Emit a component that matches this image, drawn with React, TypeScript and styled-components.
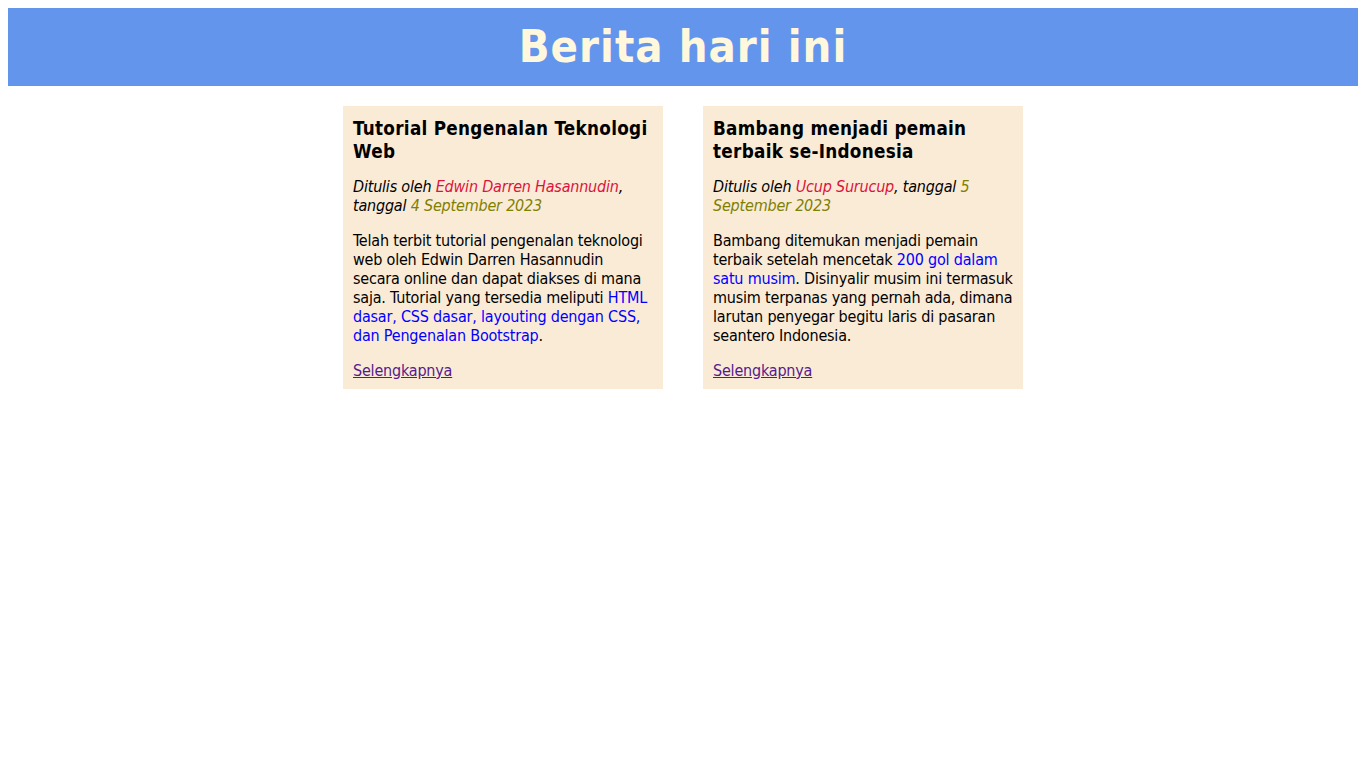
import React from "react";
import styled, { createGlobalStyle } from "styled-components";

const GlobalStyle = createGlobalStyle`
  body {
    margin: 8px;
    background: #ffffff;
    font-family: Tahoma, "DejaVu Sans Condensed", "DejaVu Sans", sans-serif;
    color: #000000;
  }
`;

const Header = styled.header`
  height: 78px;
  background: #6495ed;
  display: flex;
  align-items: center;
  justify-content: center;
`;

const Title = styled.h1`
  margin: 0;
  font-size: 45px;
  line-height: 53px;
  letter-spacing: 1px;
  font-weight: bold;
  color: #fff8dc;
  padding-bottom: 2px;
`;

const Main = styled.main`
  display: flex;
  justify-content: center;
  align-items: flex-start;
  gap: 40px;
  margin-top: 20px;
`;

const Card = styled.article`
  width: 300px;
  padding: 11px 10px 9px;
  background: #faebd7;
`;

const Heading = styled.h3`
  margin: 0 0 14px;
  font-size: 18.72px;
  line-height: 23px;
  letter-spacing: 0.3px;
  font-weight: bold;
`;

const Byline = styled.p`
  margin: 0 0 16px;
  font-size: 16px;
  line-height: 19px;
  letter-spacing: -0.2px;
  font-style: italic;
`;

const Body = styled.p`
  margin: 0 0 16px;
  font-size: 16px;
  line-height: 19px;
  letter-spacing: -0.2px;
`;

const Author = styled.span`
  color: #dc143c;
`;

const DateText = styled.span`
  color: #808000;
`;

const Highlight = styled.span`
  color: #0000ff;
`;

const More = styled.a`
  display: block;
  font-size: 16px;
  line-height: 19px;
  letter-spacing: -0.2px;
  color: #551a8b;
  text-decoration: underline;
`;

type Article = {
  title: string;
  author: string;
  date: string;
  body: React.ReactNode;
};

const articles: Article[] = [
  {
    title: "Tutorial Pengenalan Teknologi Web",
    author: "Edwin Darren Hasannudin",
    date: "4 September 2023",
    body: (
      <>
        Telah terbit tutorial pengenalan teknologi web oleh Edwin Darren
        Hasannudin secara online dan dapat diakses di mana saja. Tutorial yang
        tersedia meliputi{" "}
        <Highlight>
          HTML dasar, CSS dasar, layouting dengan CSS, dan Pengenalan Bootstrap
        </Highlight>
        .
      </>
    ),
  },
  {
    title: "Bambang menjadi pemain terbaik se-Indonesia",
    author: "Ucup Surucup",
    date: "5 September 2023",
    body: (
      <>
        Bambang ditemukan menjadi pemain terbaik setelah mencetak{" "}
        <Highlight>200 gol dalam satu musim</Highlight>. Disinyalir musim ini
        termasuk musim terpanas yang pernah ada, dimana larutan penyegar begitu
        laris di pasaran seantero Indonesia.
      </>
    ),
  },
];

export default function App() {
  return (
    <>
      <GlobalStyle />
      <Header>
        <Title>Berita hari ini</Title>
      </Header>
      <Main>
        {articles.map((a) => (
          <Card key={a.title}>
            <Heading>{a.title}</Heading>
            <Byline>
              Ditulis oleh <Author>{a.author}</Author>, tanggal{" "}
              <DateText>{a.date}</DateText>
            </Byline>
            <Body>{a.body}</Body>
            <More href="#">Selengkapnya</More>
          </Card>
        ))}
      </Main>
    </>
  );
}
